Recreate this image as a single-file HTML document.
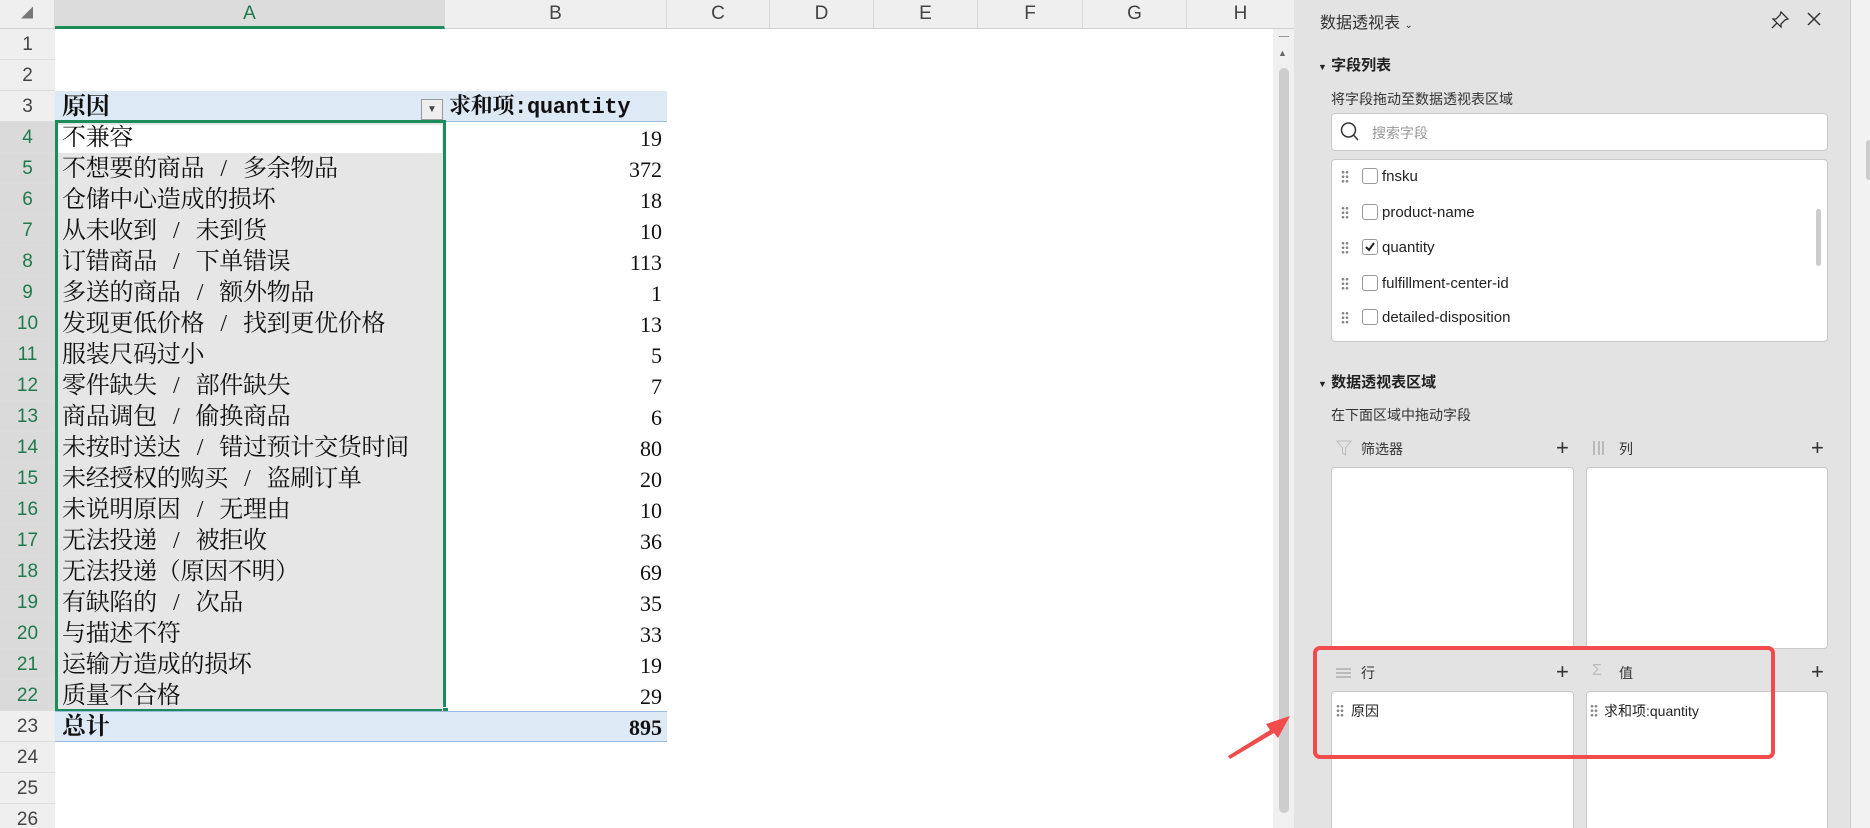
<!DOCTYPE html>
<html><head><meta charset="utf-8"><style>
*{margin:0;padding:0;box-sizing:border-box}
html,body{width:1870px;height:828px;overflow:hidden}
body{background:#fff;position:relative;font-family:"Liberation Sans","Noto Sans CJK SC",sans-serif}
.a{position:absolute}
.ch{position:absolute;top:0;height:29px;background:#efefef;border-right:1px solid #d8d8d8;border-bottom:1px solid #d0d0d0;text-align:center;line-height:27px;font-size:19px;color:#444}
.rh{position:absolute;left:0;width:55px;height:31px;background:#efefef;border-bottom:1px solid #dcdcdc;text-align:center;line-height:31px;font-size:19px;color:#444}
.rh.s{background:#dadada;color:#1e7a4d}
.cell{position:absolute;height:31px;line-height:33px;font-family:"Liberation Serif","Noto Serif CJK SC",serif;font-size:24px;color:#111;white-space:nowrap;letter-spacing:-0.3px}
.num{position:absolute;left:445px;width:217px;text-align:right;height:31px;line-height:33px;font-family:"Liberation Serif","Noto Serif CJK SC",serif;font-size:22px;color:#111}
.p{position:absolute;font-size:14px;color:#333;font-family:"Liberation Sans","Noto Sans CJK SC",sans-serif}
.box{position:absolute;background:#fff;border:1px solid #c9c9c9;border-radius:4px}
.dots{position:absolute;width:8px;height:13px;background:radial-gradient(circle,#888 1.2px,transparent 1.5px) 0 0/4px 4.5px}
.cb{position:absolute;width:16px;height:16px;border:1px solid #999;border-radius:3px;background:#fff}
.fl{position:absolute;font-size:15px;color:#222;line-height:18px}
.plus{position:absolute;font-size:22px;color:#333;line-height:20px}
</style></head><body>
<div class="ch" style="left:0;width:55px;font-size:12px;color:#777">◢</div>
<div class="ch" style="left:55px;width:390px;background:#dcdcdc;color:#1e7a4d;border-bottom:3px solid #1e8c5a">A</div>
<div class="ch" style="left:445px;width:222px">B</div>
<div class="ch" style="left:667px;width:103px">C</div>
<div class="ch" style="left:770px;width:104px">D</div>
<div class="ch" style="left:874px;width:104px">E</div>
<div class="ch" style="left:978px;width:105px">F</div>
<div class="ch" style="left:1083px;width:104px">G</div>
<div class="ch" style="left:1187px;width:107px;border-right:none">H</div>
<div class="rh" style="top:29px">1</div><div class="rh" style="top:60px">2</div><div class="rh" style="top:91px">3</div>
<div class="rh s" style="top:122px">4</div><div class="rh s" style="top:153px">5</div><div class="rh s" style="top:184px">6</div><div class="rh s" style="top:215px">7</div><div class="rh s" style="top:246px">8</div><div class="rh s" style="top:277px">9</div><div class="rh s" style="top:308px">10</div><div class="rh s" style="top:339px">11</div><div class="rh s" style="top:370px">12</div><div class="rh s" style="top:401px">13</div><div class="rh s" style="top:432px">14</div><div class="rh s" style="top:463px">15</div><div class="rh s" style="top:494px">16</div><div class="rh s" style="top:525px">17</div><div class="rh s" style="top:556px">18</div><div class="rh s" style="top:587px">19</div><div class="rh s" style="top:618px">20</div><div class="rh s" style="top:649px">21</div><div class="rh s" style="top:680px">22</div>
<div class="rh" style="top:711px">23</div><div class="rh" style="top:742px">24</div><div class="rh" style="top:773px">25</div><div class="rh" style="top:804px">26</div>
<div class="a" style="left:55px;top:91px;width:612px;height:31px;background:#dde9f5;border-bottom:1px solid #9bbbe0"></div>
<div class="cell" style="left:62px;top:91px;font-weight:bold">原因</div>
<div class="a" style="left:421px;top:99px;width:22px;height:21px;border:1px solid #999;background:#eee;font-size:10px;text-align:center;line-height:20px;color:#444">▼</div>
<div class="cell" style="left:449px;top:91px;font-weight:bold;font-size:22px;font-family:'Liberation Mono','Noto Serif CJK SC',monospace">求和项:quantity</div>
<div class="a" style="left:55px;top:122px;width:390px;height:589px;background:#e6e6e6"></div>
<div class="a" style="left:58px;top:125px;width:384px;height:28px;background:#fff"></div>
<div class="a" style="left:55px;top:120px;width:391px;height:592px;border:3px solid #1e8c5a"></div>
<div class="a" style="left:442px;top:707px;width:7px;height:7px;background:#1e8c5a;border:1px solid #fff"></div>
<div class="cell" style="left:62px;top:122px">不兼容</div><div class="num" style="top:122px">19</div>
<div class="cell" style="left:62px;top:153px">不想要的商品&ensp;&thinsp;/&ensp;&thinsp;多余物品</div><div class="num" style="top:153px">372</div>
<div class="cell" style="left:62px;top:184px">仓储中心造成的损坏</div><div class="num" style="top:184px">18</div>
<div class="cell" style="left:62px;top:215px">从未收到&ensp;&thinsp;/&ensp;&thinsp;未到货</div><div class="num" style="top:215px">10</div>
<div class="cell" style="left:62px;top:246px">订错商品&ensp;&thinsp;/&ensp;&thinsp;下单错误</div><div class="num" style="top:246px">113</div>
<div class="cell" style="left:62px;top:277px">多送的商品&ensp;&thinsp;/&ensp;&thinsp;额外物品</div><div class="num" style="top:277px">1</div>
<div class="cell" style="left:62px;top:308px">发现更低价格&ensp;&thinsp;/&ensp;&thinsp;找到更优价格</div><div class="num" style="top:308px">13</div>
<div class="cell" style="left:62px;top:339px">服装尺码过小</div><div class="num" style="top:339px">5</div>
<div class="cell" style="left:62px;top:370px">零件缺失&ensp;&thinsp;/&ensp;&thinsp;部件缺失</div><div class="num" style="top:370px">7</div>
<div class="cell" style="left:62px;top:401px">商品调包&ensp;&thinsp;/&ensp;&thinsp;偷换商品</div><div class="num" style="top:401px">6</div>
<div class="cell" style="left:62px;top:432px">未按时送达&ensp;&thinsp;/&ensp;&thinsp;错过预计交货时间</div><div class="num" style="top:432px">80</div>
<div class="cell" style="left:62px;top:463px">未经授权的购买&ensp;&thinsp;/&ensp;&thinsp;盗刷订单</div><div class="num" style="top:463px">20</div>
<div class="cell" style="left:62px;top:494px">未说明原因&ensp;&thinsp;/&ensp;&thinsp;无理由</div><div class="num" style="top:494px">10</div>
<div class="cell" style="left:62px;top:525px">无法投递&ensp;&thinsp;/&ensp;&thinsp;被拒收</div><div class="num" style="top:525px">36</div>
<div class="cell" style="left:62px;top:556px">无法投递（原因不明）</div><div class="num" style="top:556px">69</div>
<div class="cell" style="left:62px;top:587px">有缺陷的&ensp;&thinsp;/&ensp;&thinsp;次品</div><div class="num" style="top:587px">35</div>
<div class="cell" style="left:62px;top:618px">与描述不符</div><div class="num" style="top:618px">33</div>
<div class="cell" style="left:62px;top:649px">运输方造成的损坏</div><div class="num" style="top:649px">19</div>
<div class="cell" style="left:62px;top:680px">质量不合格</div><div class="num" style="top:680px">29</div>
<div class="a" style="left:55px;top:711px;width:612px;height:31px;background:#dde9f5;border-top:1px solid #9bbbe0;border-bottom:1px solid #9bbbe0"></div>
<div class="cell" style="left:62px;top:711px;font-weight:bold">总计</div><div class="num" style="top:711px;font-weight:bold">895</div>
<div class="a" style="left:1273px;top:29px;width:21px;height:799px;background:#f0f0f0"></div>
<div class="a" style="left:1279px;top:36px;width:10px;height:1px;background:#999"></div>
<div class="a" style="left:1278px;top:48px;font-size:9px;color:#666">▲</div>
<div class="a" style="left:1279px;top:68px;width:10px;height:745px;background:#cdcdcd;border-radius:5px"></div>
<div class="a" style="left:1294px;top:0;width:556px;height:828px;background:#e3e3e3"></div>
<div class="a" style="left:1850px;top:0;width:20px;height:828px;background:#f2f2f2;border-left:1px solid #ccc"></div>
<div class="a" style="left:1866px;top:140px;width:6px;height:40px;background:#ccc;border-radius:3px"></div>
<div class="p" style="left:1320px;top:9px;font-size:16px;color:#333">数据透视表 <span style="font-size:10px">⌄</span></div>
<svg class="a" style="left:1770px;top:10px" width="20" height="20" viewBox="0 0 20 20"><path d="M11 2 L18 9 L15 10 L11 14 L11 17 L3 9 L6 9 L10 5 Z M7 13 L2 18" fill="none" stroke="#333" stroke-width="1.3"/></svg>
<svg class="a" style="left:1806px;top:11px" width="16" height="16" viewBox="0 0 16 16"><path d="M2 2L14 14M14 2L2 14" stroke="#333" stroke-width="1.5"/></svg>
<div class="p" style="left:1318px;top:54px;font-weight:bold;font-size:15px;color:#222"><span style="font-size:9px">▼</span> 字段列表</div>
<div class="p" style="left:1331px;top:89px">将字段拖动至数据透视表区域</div>
<div class="box" style="left:1331px;top:113px;width:497px;height:38px"></div>
<svg class="a" style="left:1340px;top:121px" width="20" height="22" viewBox="0 0 20 22"><circle cx="8.5" cy="9" r="7" fill="none" stroke="#333" stroke-width="1.5"/><path d="M13.5 14 L18 19" stroke="#333" stroke-width="1.5"/></svg>
<div class="p" style="left:1372px;top:123px;color:#999">搜索字段</div>
<div class="box" style="left:1331px;top:159px;width:497px;height:183px"></div>
<div class="a" style="left:1816px;top:209px;width:5px;height:57px;background:#ccc;border-radius:3px"></div>
<div class="dots" style="left:1341px;top:170px"></div><div class="cb" style="left:1362px;top:168px"></div><div class="fl" style="left:1382px;top:168px">fnsku</div>
<div class="dots" style="left:1341px;top:206px"></div><div class="cb" style="left:1362px;top:204px"></div><div class="fl" style="left:1382px;top:204px">product-name</div>
<div class="dots" style="left:1341px;top:241px"></div><div class="cb" style="left:1362px;top:239px"><svg width="14" height="14" viewBox="0 0 14 14" style="display:block"><path d="M3 7 L6 10 L11 3" fill="none" stroke="#222" stroke-width="2"/></svg></div><div class="fl" style="left:1382px;top:239px">quantity</div>
<div class="dots" style="left:1341px;top:277px"></div><div class="cb" style="left:1362px;top:275px"></div><div class="fl" style="left:1382px;top:275px">fulfillment-center-id</div>
<div class="dots" style="left:1341px;top:311px"></div><div class="cb" style="left:1362px;top:309px"></div><div class="fl" style="left:1382px;top:309px">detailed-disposition</div>
<div class="p" style="left:1318px;top:371px;font-weight:bold;font-size:15px;color:#222"><span style="font-size:9px">▼</span> 数据透视表区域</div>
<div class="p" style="left:1331px;top:405px">在下面区域中拖动字段</div>
<svg class="a" style="left:1336px;top:440px" width="16" height="16" viewBox="0 0 16 16"><path d="M1 1 H15 L9.5 8 V15 L6.5 13 V8 Z" fill="none" stroke="#bbb"/></svg>
<div class="p" style="left:1361px;top:439px">筛选器</div>
<div class="plus" style="left:1556px;top:438px">+</div>
<div class="a" style="left:1593px;top:441px;width:11px;height:14px;border-left:2px solid #bbb;border-right:2px solid #bbb;background:linear-gradient(90deg,transparent 3px,#bbb 3px,#bbb 5px,transparent 5px)"></div>
<div class="p" style="left:1619px;top:439px">列</div>
<div class="plus" style="left:1811px;top:438px">+</div>
<div class="box" style="left:1331px;top:467px;width:243px;height:182px"></div>
<div class="box" style="left:1586px;top:467px;width:242px;height:182px"></div>
<div class="a" style="left:1336px;top:668px;width:15px;height:10px;border-top:2px solid #bbb;border-bottom:2px solid #bbb;background:linear-gradient(#bbb,#bbb) 0 2px/15px 2px no-repeat"></div>
<div class="p" style="left:1361px;top:663px">行</div>
<div class="plus" style="left:1556px;top:662px">+</div>
<div class="a" style="left:1592px;top:662px;font-size:16px;color:#bbb">Σ</div>
<div class="p" style="left:1619px;top:663px">值</div>
<div class="plus" style="left:1811px;top:662px">+</div>
<div class="box" style="left:1331px;top:691px;width:243px;height:137px;border-bottom:none;border-radius:4px 4px 0 0"></div>
<div class="box" style="left:1586px;top:691px;width:242px;height:137px;border-bottom:none;border-radius:4px 4px 0 0"></div>
<div class="dots" style="left:1336px;top:704px"></div><div class="p" style="left:1351px;top:701px;color:#222">原因</div>
<div class="dots" style="left:1590px;top:704px"></div><div class="p" style="left:1604px;top:701px;color:#222">求和项:quantity</div>
<div class="a" style="left:1313px;top:646px;width:462px;height:113px;border:4px solid #f24b4b;border-radius:7px"></div>
<svg class="a" style="left:1220px;top:700px" width="80" height="64" viewBox="0 0 80 64"><path d="M8 56 L50 30 L46 24 L70 16 L58 38 L54 33 L10 59 Z" fill="#f24b4b"/></svg>
</body></html>
